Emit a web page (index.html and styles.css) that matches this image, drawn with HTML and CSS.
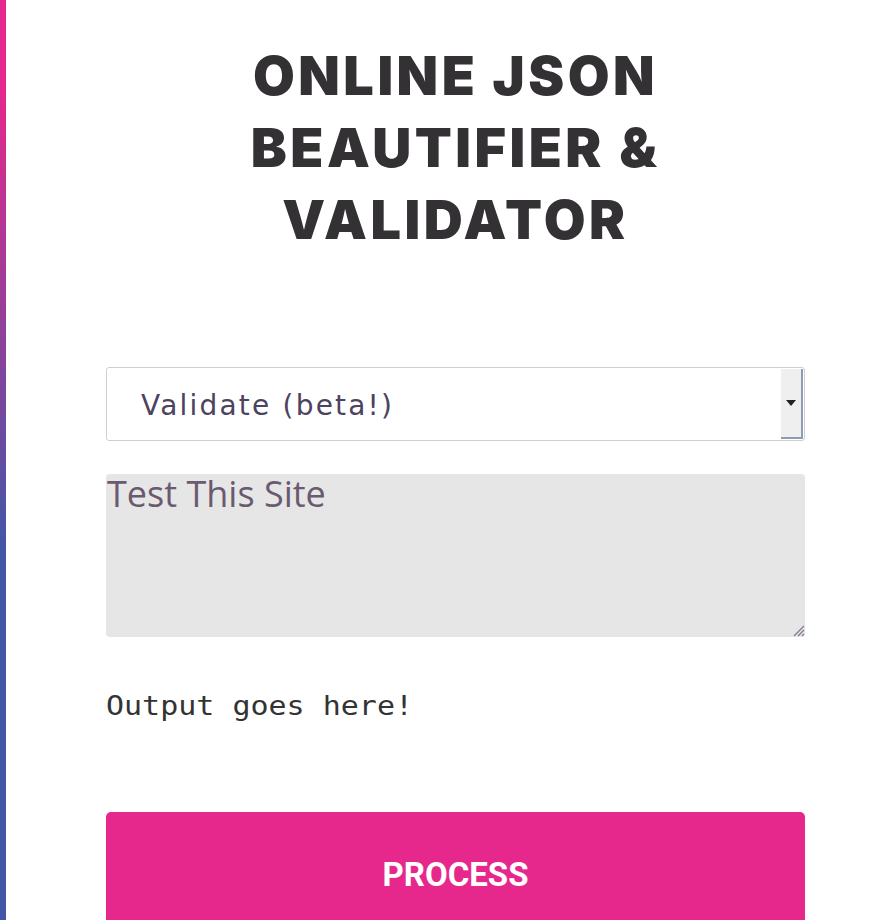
FILE: index.html
```html
<!DOCTYPE html>
<html>
<head>
<meta charset="utf-8">
<link rel="stylesheet" href="styles.css">
</head>
<body>
<div class="strip"></div>
<main class="content">
  <h1 class="title">ONLINE JSON<br>BEAUTIFIER &amp;<br>VALIDATOR</h1>
  <div class="select">
    <span class="select-text">Validate (beta!)</span>
    <span class="select-btn"><span class="arrow"></span></span>
  </div>
  <div class="textarea">
    <span class="ta-text">Test This Site</span>
    <svg class="grip" width="14" height="14" viewBox="0 0 14 14"><path d="M13 3 L3 13 M13 7 L7 13 M13 11 L11 13" stroke="#8a7a90" stroke-width="1.4"/></svg>
  </div>
  <pre class="output">Output goes here!</pre>
  <button class="process">PROCESS</button>
</main>
</body>
</html>
```
FILE: styles.css
```css
html, body { margin: 0; padding: 0; background: #fff; }
body { display: flex; min-height: 920px; overflow: hidden; }
.strip {
  width: 6px;
  flex: none;
  background: linear-gradient(to bottom, #e6288c 0px, #e6288c 90px, #4556a6 540px, #4556a6 100%);
}
.content {
  margin-left: 100px;
  width: 699px;
  display: flex;
  flex-direction: column;
}
.title {
  margin: 40px 0 0 0;
  text-align: center;
  font-family: "Inter", sans-serif;
  font-weight: 900;
  font-size: 54px;
  line-height: 72px;
  letter-spacing: 3.5px;
  color: #333133;
}
.select {
  margin-top: 111px;
  height: 74px;
  box-sizing: border-box;
  border: 1px solid #cfcfcf;
  border-radius: 3px;
  display: flex;
  align-items: center;
  justify-content: space-between;
}
.select-text {
  margin-left: 34px;
  font-family: "DejaVu Sans", sans-serif;
  font-size: 28px;
  letter-spacing: 2.2px;
  color: #4d4360;
  margin-top: 2px;
}
.select-btn {
  width: 22px;
  height: 70px;
  margin-right: 1px;
  background: #efefef;
  border-right: 2px solid #8c9db0;
  border-bottom: 2px solid #8c9db0;
  box-sizing: border-box;
  display: flex;
  align-items: center;
  justify-content: center;
}
.arrow {
  width: 0; height: 0;
  border-left: 5px solid transparent;
  border-right: 5px solid transparent;
  border-top: 6px solid #222;
}
.textarea {
  position: relative;
  margin-top: 33px;
  height: 163px;
  background: #e6e6e6;
  border-radius: 4px;
}
.ta-text {
  display: block;
  padding: 0 0 0 1px;
  margin-top: -2px;
  font-family: "Open Sans", sans-serif;
  font-size: 36px;
  line-height: 44px;
  color: #6a5a70;
}
.grip { position: absolute; right: 0; bottom: 0; }
.output {
  margin: 53px 0 0 0;
  font-family: "DejaVu Sans Mono", monospace;
  font-size: 30px;
  line-height: 36px;
  color: #333;
  font-weight: normal;
  transform: scaleY(0.88);
  transform-origin: left top;
}
.process {
  margin-top: 86px;
  height: 130px;
  border: none;
  border-radius: 5px;
  background: #e6288c;
  color: #fff;
  font-family: "Roboto", sans-serif;
  font-weight: 700;
  font-size: 33px;
  padding-bottom: 6px;
  flex: none;
}
```
